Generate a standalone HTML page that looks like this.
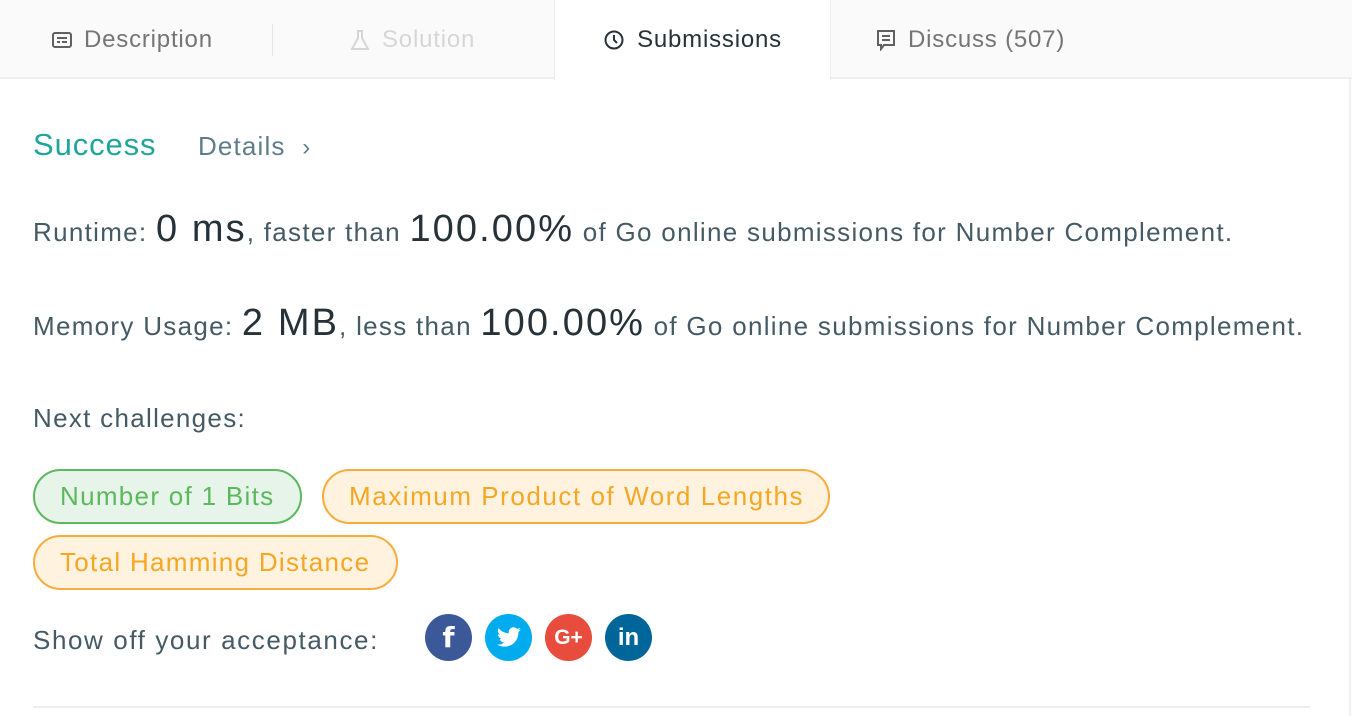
<!DOCTYPE html>
<html><head><meta charset="utf-8"><style>
*{margin:0;padding:0;box-sizing:border-box}
body{width:1352px;height:716px;background:#fff;font-family:"Liberation Sans",sans-serif;color:#455a64;position:relative;overflow:hidden}
.bar{position:absolute;left:0;top:0;width:1352px;height:79px;background:#fafafa;border-bottom:2px solid #eee}
.tab{position:absolute;top:0;height:79px;display:flex;align-items:center;font-size:24px;color:#757575;letter-spacing:.8px}
.tab svg{margin-right:12px}
.active{background:#fff;left:554px;width:277px;justify-content:center;border-left:1px solid #eee;border-right:1px solid #eee;color:#263238;height:80px}
.sep{position:absolute;left:272px;top:24px;width:1px;height:32px;background:#e6e6e6}
.abs{position:absolute;white-space:nowrap}
.t{font-size:26px;letter-spacing:1.3px}
.big{font-size:38px;color:#263238;letter-spacing:2.1px}
.pill{position:absolute;height:55px;border-radius:28px;font-size:26px;display:flex;align-items:center;padding-left:25px;letter-spacing:1.3px}
.g{background:#e6f4ea;border:2px solid #5cb85c;color:#5cb85c}
.o{background:#fff3e0;border:2px solid #f8ac3c;color:#f5a623}
.c{position:absolute;top:614px;width:47px;height:47px;border-radius:50%;color:#fff;font-weight:bold;display:flex;align-items:center;justify-content:center}
</style></head><body>
<div class="bar"></div>
<div class="tab" style="left:52px"><svg width="20" height="18" viewBox="0 0 20 18"><rect x="1" y="2" width="18" height="14" rx="2" fill="none" stroke="#616161" stroke-width="2"/><rect x="5" y="6" width="10" height="2" fill="#616161"/><rect x="5" y="10" width="3" height="2" fill="#616161"/><rect x="10" y="10" width="5" height="2" fill="#616161"/></svg>Description</div>
<div class="sep"></div>
<div class="tab" style="left:350px;color:#d6d6d6"><svg width="20" height="22" viewBox="0 0 20 22"><path d="M7 2h6M8 2v7L2 20h16L12 9V2" fill="none" stroke="#d6d6d6" stroke-width="2"/></svg>Solution</div>
<div class="tab active"><svg width="22" height="22" viewBox="0 0 22 22"><circle cx="11" cy="11" r="8.5" fill="none" stroke="#263238" stroke-width="2"/><path d="M11 6v5l3 3" fill="none" stroke="#263238" stroke-width="2"/></svg>Submissions</div>
<div class="tab" style="left:876px"><svg width="20" height="22" viewBox="0 0 20 22"><path d="M2 2h16v14H8l-3 4v-4H2z" fill="none" stroke="#616161" stroke-width="2"/><path d="M6 7h8M6 11h8" stroke="#616161" stroke-width="2"/></svg>Discuss (507)</div>
<div class="abs" style="left:1349px;top:79px;width:2px;height:637px;background:#f0f0f0"></div>

<div class="abs" style="left:33px;top:127px;font-size:31px;color:#1fa69a;letter-spacing:.9px">Success</div>
<div class="abs t" style="left:198px;top:131px;color:#607d8b;letter-spacing:1.15px">Details&nbsp;&nbsp;<span style="font-size:24px">›</span></div>

<div class="abs t" style="left:33px;top:208px">Runtime: <span class="big">0 ms</span>, faster than <span class="big">100.00%</span> of Go online submissions for Number Complement.</div>
<div class="abs t" style="left:33px;top:302px">Memory Usage: <span class="big">2 MB</span>, less than <span class="big">100.00%</span> of Go online submissions for Number Complement.</div>
<div class="abs t" style="left:33px;top:403px">Next challenges:</div>

<div class="pill g" style="left:33px;top:469px;width:269px">Number of 1 Bits</div>
<div class="pill o" style="left:322px;top:469px;width:508px;letter-spacing:1.55px">Maximum Product of Word Lengths</div>
<div class="pill o" style="left:33px;top:535px;width:365px">Total Hamming Distance</div>

<div class="abs t" style="left:33px;top:625px;letter-spacing:1.6px">Show off your acceptance:</div>
<div class="c" style="left:425px;background:#3b5998;font-size:28px;font-family:'DejaVu Sans',sans-serif">f</div>
<div class="c" style="left:485px;background:#00aced"><svg width="26" height="22" viewBox="0 0 24 20"><path d="M23 2.3c-.8.4-1.7.6-2.6.7.9-.6 1.6-1.4 2-2.5-.9.5-1.9.9-2.9 1.1A4.5 4.5 0 0 0 11.8 5.7 12.9 12.9 0 0 1 2.4 1a4.5 4.5 0 0 0 1.4 6c-.7 0-1.4-.2-2-.6 0 2.2 1.6 4 3.6 4.5-.7.2-1.4.2-2 .1.6 1.8 2.3 3.1 4.2 3.1A9.1 9.1 0 0 1 .9 16c2 1.3 4.4 2 6.9 2 8.3 0 12.9-6.9 12.9-12.9v-.6c.9-.6 1.6-1.4 2.3-2.2z" fill="#fff"/></svg></div>
<div class="c" style="left:545px;background:#e74c3c;font-size:21px">G+</div>
<div class="c" style="left:605px;background:#006699;font-size:24px">in</div>

<div class="abs" style="left:33px;top:706px;width:1277px;height:2px;background:#eee"></div>
</body></html>
